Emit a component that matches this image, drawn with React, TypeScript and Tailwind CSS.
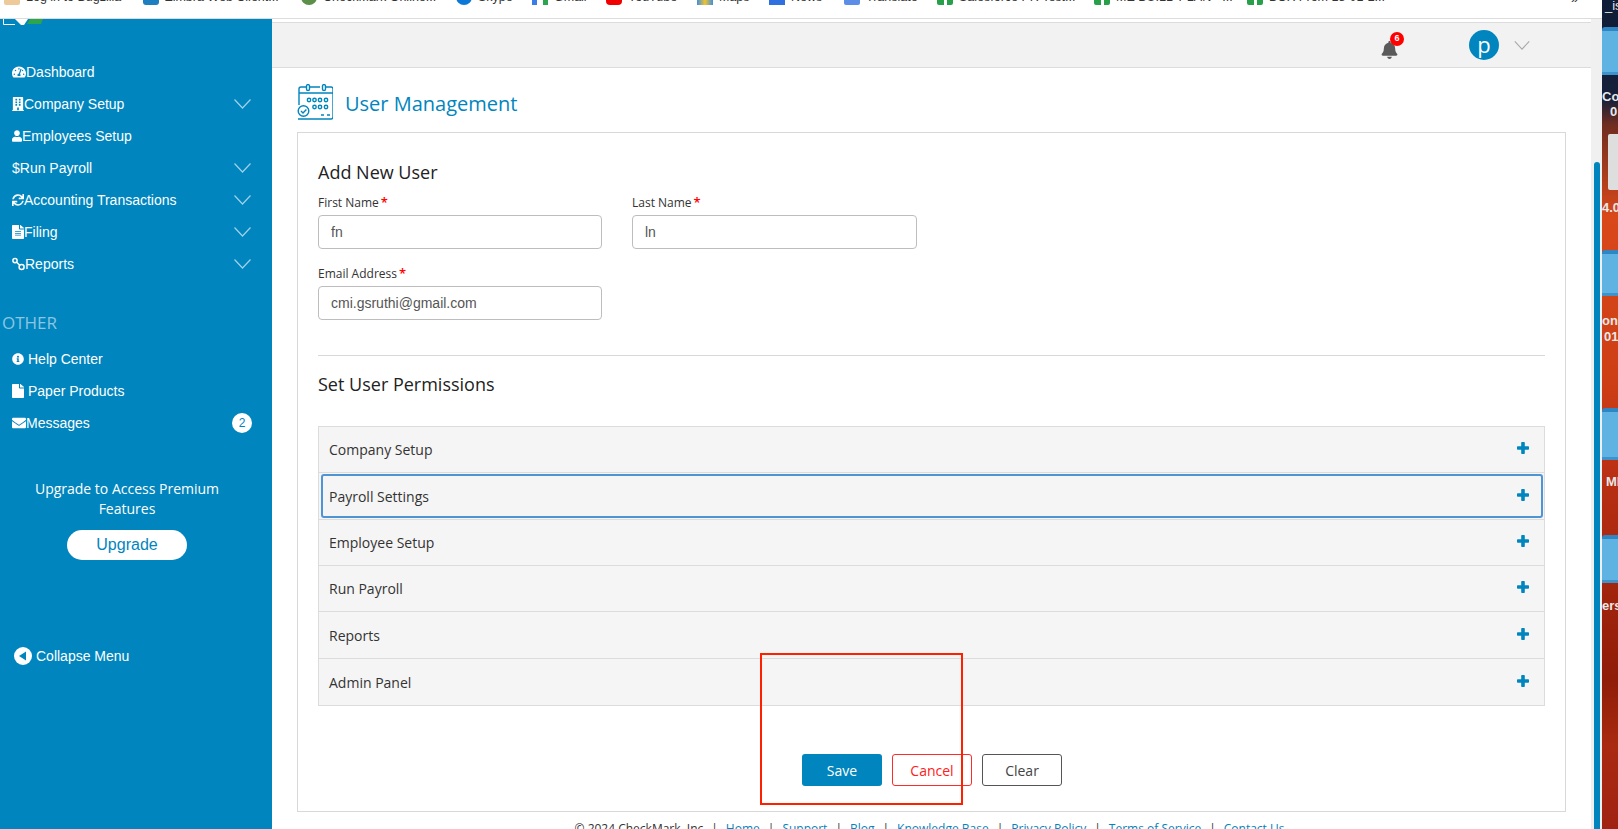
import React from "react";
import { FaTachometerAlt, FaBuilding, FaUser, FaSync, FaFileAlt, FaInfoCircle, FaFile, FaEnvelope, FaBell } from "react-icons/fa";

function Chevron({ className }: { className: string }) {
  return (
    <svg viewBox="0 0 17 10" fill="none" stroke="currentColor" strokeWidth="1.2" className={className}>
      <polyline points="0.5,0.5 8.5,9 16.5,0.5" />
    </svg>
  );
}

function Plus() {
  return (
    <svg viewBox="0 0 12 12" fill="#0085be" className="w-3 h-3 mb-[3px] shrink-0">
      <rect x="4.2" y="0" width="3.6" height="12" rx="0.8" />
      <rect x="0" y="4.2" width="12" height="3.6" rx="0.8" />
    </svg>
  );
}

function ReportsIcon() {
  return (
    <svg viewBox="0 0 13 14" fill="none" stroke="white" strokeWidth="1.5" className="w-[13px] h-[14px] shrink-0">
      <circle cx="3" cy="3.6" r="2.1" />
      <circle cx="9.6" cy="10" r="2.5" />
      <line x1="4.6" y1="5.2" x2="7.8" y2="8.2" />
    </svg>
  );
}

function CalendarIcon() {
  return (
    <svg viewBox="0 0 36 36" fill="none" stroke="#0085be" strokeWidth="1.4" className="w-9 h-9 shrink-0">
      <path d="M9 3H4a2 2 0 0 0-2 2v16M13 3h10M29 3h5a2 2 0 0 1 2 2v28a2 2 0 0 1-2 2H8M2 9h34M1 35h9" />
      <rect x="9.5" y="0.6" width="3" height="6" rx="1.5" />
      <rect x="25.5" y="0.6" width="3" height="6" rx="1.5" />
      <circle cx="12" cy="16" r="1.7" />
      <circle cx="17.5" cy="16" r="1.7" />
      <circle cx="23" cy="16" r="1.7" />
      <circle cx="29" cy="16" r="1.7" />
      <circle cx="17.5" cy="23" r="1.7" />
      <circle cx="23" cy="23" r="1.7" />
      <circle cx="29" cy="23" r="1.7" />
      <circle cx="6.5" cy="27" r="5.3" />
      <path d="M4 27l2 2 3.4-3.6" />
      <path d="M24 31h3M30 31h3" />
    </svg>
  );
}

function Bookmark({ width, label, icon }: { width: string; label: string; icon: React.ReactNode }) {
  return (
    <div className={`${width} flex items-center gap-[6px] shrink-0`}>
      <span className="w-4 h-4 shrink-0">{icon}</span>
      <span className="text-[12.5px] leading-4 text-[#333] whitespace-nowrap">{label}</span>
    </div>
  );
}

function BookmarksBar() {
  const sheet = <span className="block w-4 h-4 rounded-[2px] bg-[#28a04a]"><span className="block w-[3px] h-4 mx-auto bg-white" /></span>;
  const round = (c: string) => <span className={`block w-4 h-4 ${c}`} />;
  return (
    <div className="h-[19px] shrink-0 border-b border-[#dcdcdc] bg-white overflow-hidden">
      <div className="flex items-center pl-[4px] -mt-[11px] h-4">
        <Bookmark width="w-[139px]" label="Log in to Bugzilla" icon={round("bg-[#eec99a] rounded-[2px]")} />
        <Bookmark width="w-[158px]" label="Zimbra Web Client..." icon={round("bg-[#1d7fc0] rounded-[3px]")} />
        <Bookmark width="w-[155px]" label="CheckMark Online..." icon={round("bg-[#5b8f4a] rounded-full")} />
        <Bookmark width="w-[76px]" label="Skype" icon={round("bg-[#0c78d8] rounded-full")} />
        <Bookmark width="w-[74px]" label="Gmail" icon={round("bg-[linear-gradient(90deg,#3b7de8_30%,#ffffff_30%,#ffffff_70%,#2da44e_70%)]")} />
        <Bookmark width="w-[91px]" label="YouTube" icon={round("bg-[#f00000] rounded-[4px]")} />
        <Bookmark width="w-[72px]" label="Maps" icon={round("bg-[linear-gradient(90deg,#3f8fe0,#f0c430,#3f8fe0)]")} />
        <Bookmark width="w-[75px]" label="News" icon={round("bg-[#2f6fe0]")} />
        <Bookmark width="w-[93px]" label="Translate" icon={round("bg-[#5c8ee8] rounded-[2px]")} />
        <Bookmark width="w-[157px]" label="Salesforce PR Test..." icon={sheet} />
        <Bookmark width="w-[153px]" label="ME BUILD PLAN - ..." icon={sheet} />
        <Bookmark width="w-[324px]" label="BOX From 18-01-2..." icon={sheet} />
        <span className="mt-[4px] text-[13px] leading-4 text-[#333]">»</span>
      </div>
    </div>
  );
}

const mainNav: { label: string; icon: React.ReactNode; chevron: boolean }[] = [
  { label: "Dashboard", icon: <FaTachometerAlt className="w-[14px] h-[14px] shrink-0" />, chevron: false },
  { label: "Company Setup", icon: <FaBuilding className="w-3 h-[14px] shrink-0" preserveAspectRatio="none" />, chevron: true },
  { label: "Employees Setup", icon: <FaUser className="w-[10px] h-[12px] shrink-0" />, chevron: false },
  { label: "$Run Payroll", icon: null, chevron: true },
  { label: "Accounting Transactions", icon: <FaSync className="w-3 h-3 shrink-0" />, chevron: true },
  { label: "Filing", icon: <FaFileAlt className="w-3 h-[14px] shrink-0" preserveAspectRatio="none" />, chevron: true },
  { label: "Reports", icon: <ReportsIcon />, chevron: true },
];

function NavRow({ label, icon, chevron }: { label: string; icon: React.ReactNode; chevron: boolean }) {
  return (
    <div className="h-8 flex items-center pl-3 pr-[21px] text-white text-[14px]">
      {icon}
      <span>{label}</span>
      {chevron && <Chevron className="ml-auto w-[17px] h-[10px] text-[#9fd2ea]" />}
    </div>
  );
}

function Sidebar() {
  return (
    <aside className="w-[272px] shrink-0 bg-[#0085be] flex flex-col">
      <svg viewBox="0 0 40 7" className="ml-[3px] w-10 h-[7px] shrink-0">
        <path d="M0.5 0v5.5H12" fill="none" stroke="#ffffff" strokeWidth="1" />
        <path d="M12 0h13l-4 6h-3z" fill="#ffffff" />
        <path d="M27 0h13l-2 5h-14z" fill="#2da44e" />
      </svg>
      <div className="mt-[30px]">
        {mainNav.map((n) => (
          <NavRow key={n.label} {...n} />
        ))}
      </div>
      <div className="mt-[33px] pl-[2px] text-[17px] leading-5 text-[#8cc6e2] font-['Open_Sans',sans-serif]">OTHER</div>
      <div className="mt-[10px]">
        <div className="h-8 flex items-center pl-3 gap-1 text-white text-[14px]">
          <FaInfoCircle className="w-3 h-3" />
          <span>Help Center</span>
        </div>
        <div className="h-8 flex items-center pl-3 gap-1 text-white text-[14px]">
          <FaFile className="w-3 h-[14px]" preserveAspectRatio="none" />
          <span>Paper Products</span>
        </div>
        <div className="h-8 flex items-center pl-3 pr-5 text-white text-[14px]">
          <FaEnvelope className="w-[14px] h-[14px]" />
          <span>Messages</span>
          <span className="ml-auto w-5 h-5 rounded-full bg-white text-[#0085be] text-[12px] flex items-center justify-center">2</span>
        </div>
      </div>
      <div className="w-[254px] mt-10 flex flex-col items-center">
        <p className="w-[200px] text-center text-white text-[14px] leading-5 font-['Open_Sans',sans-serif]">Upgrade to Access Premium Features</p>
        <button className="mt-[11px] w-[120px] h-[30px] rounded-[15px] bg-white text-[#0085be] text-[16px]">Upgrade</button>
      </div>
      <div className="mt-[86px] pl-[14px] flex items-center gap-1 h-5 text-white text-[14px]">
        <svg viewBox="0 0 18 18" className="w-[18px] h-[18px] shrink-0">
          <circle cx="9" cy="9" r="9" fill="#ffffff" />
          <path d="M5 9l7-4.5v9z" fill="#0085be" />
        </svg>
        <span>Collapse Menu</span>
      </div>
    </aside>
  );
}

function Header() {
  return (
    <div className="shrink-0 pt-[3px] bg-white">
      <div className="h-[46px] bg-[#f2f2f2] border-y border-[#dcdcdc] flex items-center justify-end pr-[61px]">
        <div className="relative mt-[10px]">
          <FaBell className="w-[17px] h-[18px] text-[#5a5a5a]" />
          <span className="absolute -top-[9px] left-[9px] w-[14px] h-[14px] rounded-full bg-[#ff0000] text-white text-[9px] font-bold flex items-center justify-center">6</span>
        </div>
        <div className="ml-[71px] w-[30px] h-[30px] rounded-full bg-[#0085be] text-white text-[22px] leading-none flex items-center justify-center pb-[3px] font-['Open_Sans',sans-serif]">p</div>
        <Chevron className="ml-[15px] w-4 h-[9px] text-[#a8a8a8]" />
      </div>
    </div>
  );
}

function Field({ label, value, width }: { label: string; value: string; width: string }) {
  return (
    <div className={width}>
      <div className="h-4 overflow-visible text-[12px] leading-4 text-[#333] font-['Open_Sans',sans-serif]">
        {label}
        <span className="ml-[2px] text-[13px] font-semibold text-[#ff0000]">*</span>
      </div>
      <input
        readOnly
        value={value}
        className="mt-[5px] w-full h-[34px] border border-[#bdbdbd] rounded-[4px] pl-3 text-[14px] text-[#555] font-['Liberation_Sans',sans-serif] outline-none"
      />
    </div>
  );
}

function AccordionRow({ label, height }: { label: string; height: string }) {
  return (
    <div className={`${height} border-b border-[#dcdcdc] flex items-center justify-between pl-[10px] pr-[15px]`}>
      <span className="text-[14px] text-[#333]">{label}</span>
      <Plus />
    </div>
  );
}

function Card() {
  return (
    <section className="mt-3 w-[1269px] h-[680px] shrink-0 border border-[#d8d8d8] px-5 pt-[27px] font-['Open_Sans',sans-serif]">
      <h2 className="text-[18px] leading-6 text-[#222]">Add New User</h2>
      <div className="mt-[10px] flex gap-[30px]">
        <Field label="First Name" value="fn" width="w-[284px]" />
        <Field label="Last Name" value="ln" width="w-[285px]" />
      </div>
      <div className="mt-4">
        <Field label="Email Address" value="cmi.gsruthi@gmail.com" width="w-[284px]" />
      </div>
      <div className="mt-[35px] border-t border-[#d8d8d8]" />
      <h2 className="mt-4 text-[18px] leading-6 text-[#222]">Set User Permissions</h2>
      <div className="mt-[30px] border-x border-t border-[#dcdcdc] bg-[#f5f5f5]">
        <AccordionRow label="Company Setup" height="h-[46px]" />
        <div className="h-[47px] border-b border-[#dcdcdc] pl-[2px] pr-[1px] py-[1px]">
          <div className="h-full border-2 border-[#4f94d4] rounded-[3px] flex items-center justify-between pl-[6px] pr-3">
            <span className="text-[14px] text-[#333]">Payroll Settings</span>
            <Plus />
          </div>
        </div>
        <AccordionRow label="Employee Setup" height="h-[46px]" />
        <AccordionRow label="Run Payroll" height="h-[46px]" />
        <AccordionRow label="Reports" height="h-[47px]" />
        <AccordionRow label="Admin Panel" height="h-[47px]" />
      </div>
      <div className="mt-[48px] pl-[1px] flex justify-center gap-[10px] text-[14px]">
        <button className="w-20 h-8 rounded-[3px] bg-[#0085be] text-white">Save</button>
        <button className="w-20 h-8 rounded-[3px] border border-[#ff2a2a] text-[#ff2020]">Cancel</button>
        <button className="w-20 h-8 rounded-[3px] border border-[#555] text-[#444]">Clear</button>
      </div>
    </section>
  );
}

function Footer() {
  const links = ["Home", "Support", "Blog", "Knowledge Base", "Privacy Policy", "Terms of Service", "Contact Us"];
  return (
    <footer className="mt-[9px] w-[1269px] pr-[4px] flex justify-center gap-[8px] text-[12px] leading-4 whitespace-nowrap text-[#333] font-['Open_Sans',sans-serif]">
      <span>© 2024 CheckMark, Inc</span>
      {links.map((l) => (
        <React.Fragment key={l}>
          <span>|</span>
          <span className="text-[#0085be]">{l}</span>
        </React.Fragment>
      ))}
    </footer>
  );
}

function Folder({ className }: { className: string }) {
  return (
    <div className={`absolute left-0 w-full rounded-tl-[3px] bg-[#5fb3e2] border-t-[4px] border-b-[3px] border-t-[#2f86c4] border-b-[#3f93cc] ${className}`} />
  );
}

function Desktop() {
  return (
    <div className="relative w-4 shrink-0 overflow-hidden bg-[linear-gradient(180deg,#101d36_0%,#16203a_12%,#6e2d20_15%,#d8481a_26%,#cf3f16_45%,#b52d12_60%,#8f1d08_82%,#a92a10_90%,#a02212_100%)] text-[13px] font-bold text-[#e8e8e8] leading-4">
      <span className="absolute left-[3px] -top-[2px] font-normal">_is</span>
      <Folder className="top-[27px] h-[48px]" />
      <span className="absolute left-0 top-[89px]">Cor</span>
      <span className="absolute left-[8px] top-[104px]">0</span>
      <div className="absolute left-[6px] top-[134px] w-[20px] h-[56px] rounded-[2px] bg-[#dedede]" />
      <span className="absolute left-0 top-[200px]">4.0</span>
      <Folder className="top-[250px] h-[46px]" />
      <span className="absolute left-0 top-[313px]">onc</span>
      <span className="absolute left-[2px] top-[329px]">01</span>
      <Folder className="top-[408px] h-[52px]" />
      <span className="absolute left-[4px] top-[474px]">MI</span>
      <Folder className="top-[535px] h-[48px]" />
      <span className="absolute left-0 top-[598px]">ers</span>
    </div>
  );
}

export default function App() {
  return (
    <div className="relative w-[1618px] h-[829px] overflow-hidden flex bg-white font-['Liberation_Sans',sans-serif]">
      <div className="w-[1602px] shrink-0 flex flex-col">
        <BookmarksBar />
        <div className="flex flex-1 min-h-0">
          <Sidebar />
          <div className="w-[1319px] shrink-0 flex flex-col overflow-hidden">
            <Header />
            <main className="pl-[25px] flex flex-col">
              <div className="mt-[16px] h-9 flex items-center gap-3">
                <CalendarIcon />
                <h1 className="mt-1 text-[20px] text-[#0085be] font-['Open_Sans',sans-serif]">User Management</h1>
              </div>
              <Card />
              <Footer />
            </main>
          </div>
          <div className="w-[11px] shrink-0 bg-[#f0f0f0] pt-[143px] pl-[3px]">
            <div className="w-[6px] h-full rounded-t-[3px] bg-[#0085be]" />
          </div>
        </div>
      </div>
      <Desktop />
      <div className="absolute left-[760px] top-[653px] w-[203px] h-[152px] border-2 border-[#ff2000] pointer-events-none" />
    </div>
  );
}
